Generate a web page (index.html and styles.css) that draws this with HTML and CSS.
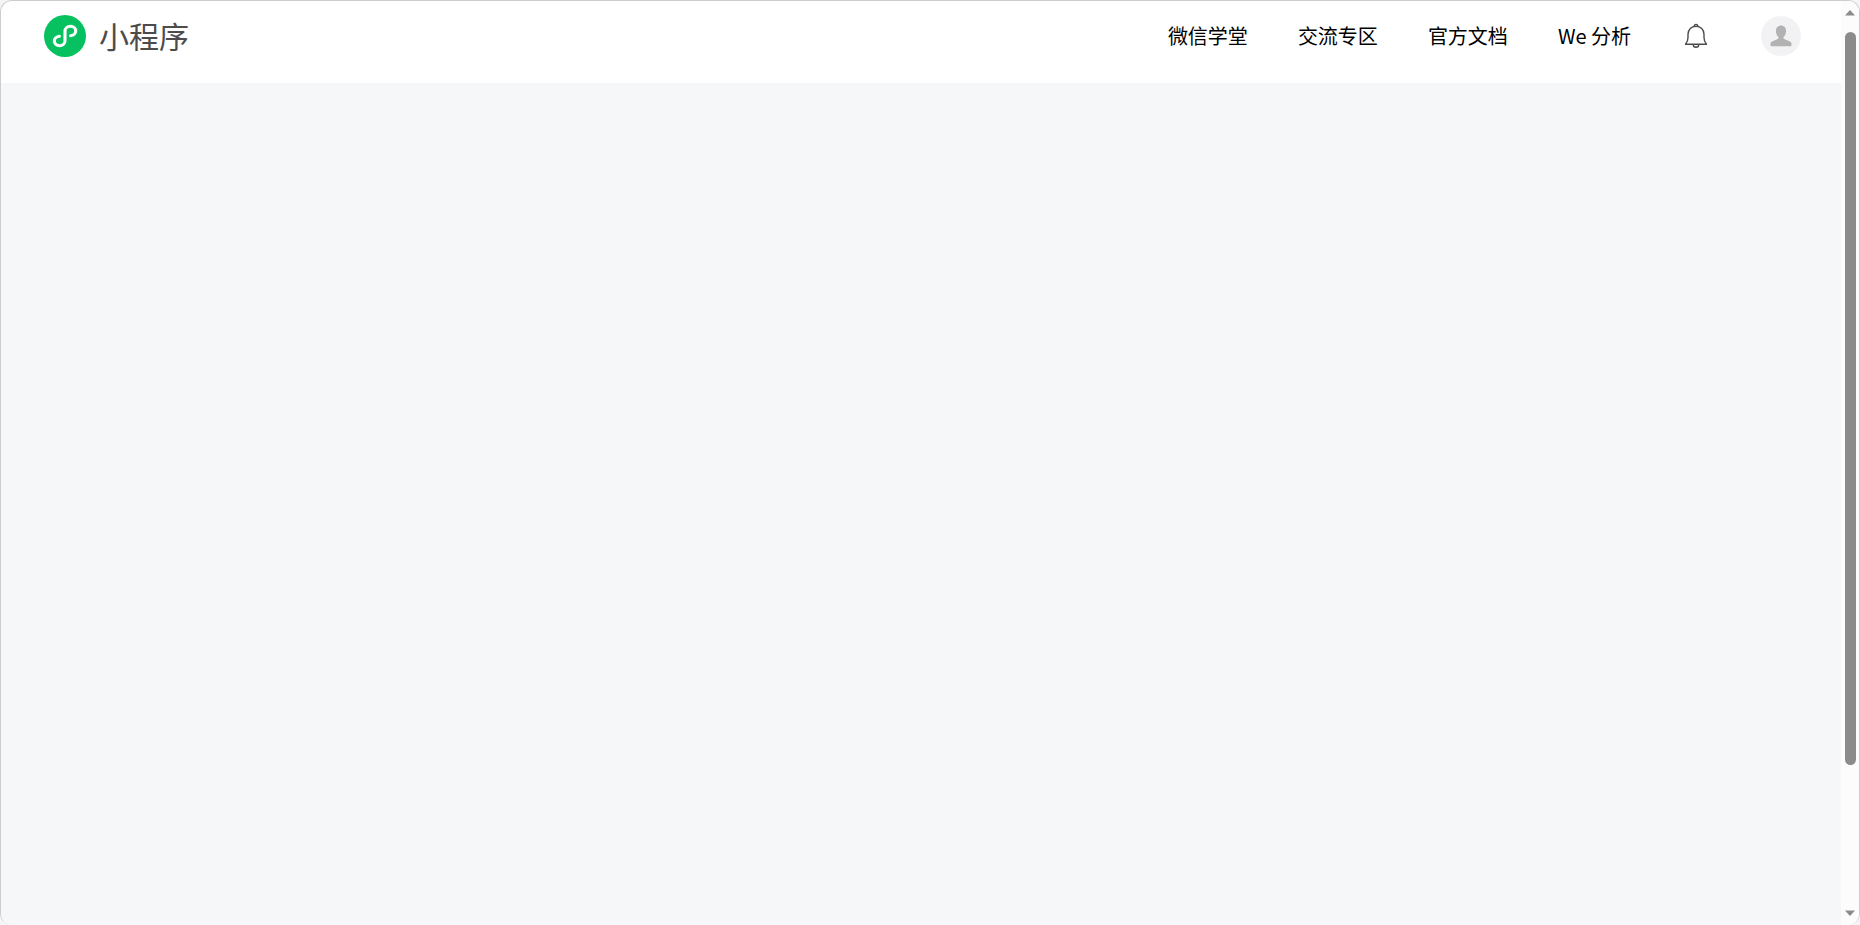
FILE: index.html
```html
<!DOCTYPE html>
<html lang="zh-CN">
<head>
<meta charset="utf-8">
<title>小程序</title>
<link rel="stylesheet" href="styles.css">
</head>
<body>
<div class="window">
  <div class="page">
    <header class="header">
      <a class="brand" href="#">
        <svg class="brand-logo" viewBox="0 0 42 42" aria-hidden="true">
          <circle cx="21" cy="21" r="21" fill="#07c160"/>
          <path d="M15.4 21.2C12.5 21.5 10.3 23.5 10.3 26.1C10.3 28.7 12.6 30.7 15.5 30.7C18.5 30.7 21 28.6 21 25.8V16.2C21 13.4 23.5 11.3 26.5 11.3C29.4 11.3 31.7 13.3 31.7 15.9C31.7 18.5 29.5 20.5 26.6 20.8" fill="none" stroke="#fff" stroke-width="3.1" stroke-linecap="round"/>
        </svg>
        <span class="brand-name">小程序</span>
      </a>
      <nav class="nav">
        <a class="nav-link" href="#">微信学堂</a>
        <a class="nav-link" href="#">交流专区</a>
        <a class="nav-link" href="#">官方文档</a>
        <a class="nav-link" href="#">We 分析</a>
        <button class="icon-button" type="button" aria-label="通知">
          <svg class="bell" viewBox="0 0 24 26" fill="none" stroke="#4c4c4c" stroke-width="1.4" aria-hidden="true">
            <path d="M1.5 21.2H22.5C20.9 19.4 20 17.4 20 14.6V11.3C20 6.7 16.6 3.2 12 3.2S4 6.7 4 11.3V14.6C4 17.4 3.1 19.4 1.5 21.2Z" stroke-linejoin="round"/>
            <path d="M10.2 3.2A1.8 1.8 0 0 1 13.8 3.2M9.2 21.4A2.8 2.8 0 0 0 14.8 21.4"/>
          </svg>
        </button>
        <button class="avatar" type="button" aria-label="账号">
          <svg class="avatar-icon" viewBox="0 0 40 40" aria-hidden="true">
            <path d="M20 9.5C23 9.5 25.1 11.8 25.1 15C25.1 17.4 24.2 19.4 22.8 20.8C22.2 21.5 22.4 22.5 23.3 23L28.8 25.5C30 26.1 30.5 27 30.5 28.2V29C30.5 29.8 30 30.3 29.2 30.3H10.8C10 30.3 9.5 29.8 9.5 29V28.2C9.5 27 10 26.1 11.2 25.5L16.7 23C17.6 22.5 17.8 21.5 17.2 20.8C15.8 19.4 14.9 17.4 14.9 15C14.9 11.8 17 9.5 20 9.5Z" fill="#b2b2b2"/>
          </svg>
        </button>
      </nav>
    </header>
    <main class="content"></main>
  </div>
  <div class="scrollbar" aria-hidden="true">
    <svg class="arrow" viewBox="0 0 10 6"><path d="M0 5.5L5 0L10 5.5Z" fill="#8b8b8b"/></svg>
    <div class="track"><div class="thumb"></div></div>
    <svg class="arrow" viewBox="0 0 10 6"><path d="M0 .5L5 6L10 .5Z" fill="#8b8b8b"/></svg>
  </div>
</div>
</body>
</html>
```
FILE: styles.css
```css
* {
  box-sizing: border-box;
}

body {
  margin: 0;
  background: #f5f5f5;
  font-family: "Noto Sans CJK SC", sans-serif;
  color: #000;
}

.window {
  display: flex;
  height: 100vh;
  border: 1px solid #cdcdcd;
  border-bottom: 0;
  border-radius: 12px;
  overflow: hidden;
  background: #fff;
}

.page {
  flex: 1;
  display: flex;
  flex-direction: column;
}

.header {
  display: flex;
  justify-content: space-between;
  align-items: center;
  height: 82px;
  padding: 0 40px 12px 43px;
}

.brand {
  display: flex;
  align-items: center;
  gap: 13px;
  color: #4c4c4c;
  text-decoration: none;
}

.brand-logo {
  width: 42px;
  height: 42px;
}

.brand-name {
  padding-bottom: 2px;
  font-size: 30px;
  line-height: 40px;
}

.nav {
  display: flex;
  align-items: center;
  gap: 50px;
}

.nav-link {
  color: inherit;
  font-size: 20px;
  line-height: 40px;
  text-decoration: none;
}

.icon-button,
.avatar {
  display: flex;
  align-items: center;
  justify-content: center;
  padding: 0;
  border: 0;
  background: none;
}

.icon-button {
  width: 30px;
  height: 30px;
}

.bell {
  width: 24px;
  height: 26px;
}

.avatar {
  width: 40px;
  height: 40px;
  border-radius: 50%;
  background: #f2f2f4;
}

.avatar-icon {
  width: 40px;
  height: 40px;
}

.content {
  flex: 1;
  background: #f6f7f9;
}

.scrollbar {
  display: flex;
  flex-direction: column;
  align-items: center;
  width: 18px;
  padding: 9px 0;
  background: #fcfcfc;
}

.arrow {
  width: 10px;
  height: 6px;
}

.track {
  flex: 1;
  width: 11px;
  padding: 16px 0;
}

.thumb {
  height: 85%;
  border-radius: 6px;
  background: #8b8b8b;
}
```
